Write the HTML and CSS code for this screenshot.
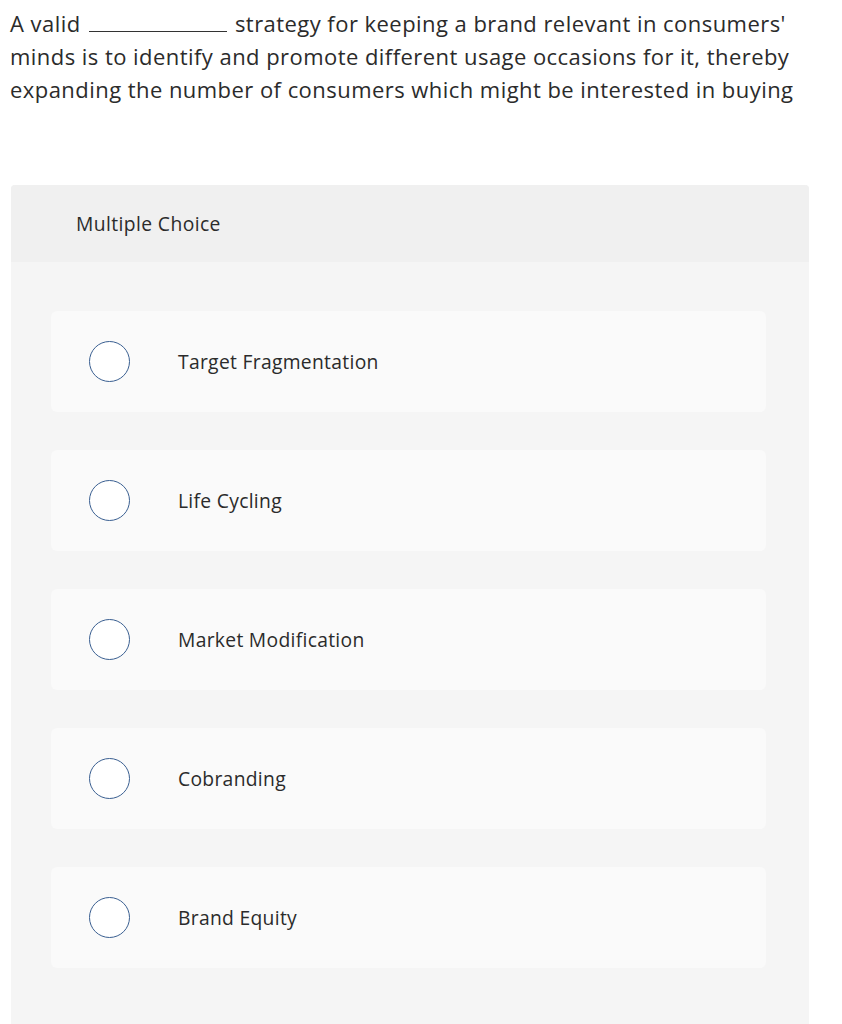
FILE: index.html
```html
<!DOCTYPE html>
<html>
<head>
<meta charset="utf-8">
<link rel="stylesheet" href="styles.css">
</head>
<body>
<div class="question">A valid <span class="blank"></span> strategy for keeping a brand relevant in consumers' minds is to identify and promote different usage occasions for it, thereby expanding the number of consumers which might be interested in buying</div>
<div class="card">
  <div class="card-header">Multiple Choice</div>
  <div class="card-body">
    <div class="option"><span class="radio"></span><span class="label">Target Fragmentation</span></div>
    <div class="option"><span class="radio"></span><span class="label">Life Cycling</span></div>
    <div class="option"><span class="radio"></span><span class="label">Market Modification</span></div>
    <div class="option"><span class="radio"></span><span class="label">Cobranding</span></div>
    <div class="option"><span class="radio"></span><span class="label">Brand Equity</span></div>
  </div>
</div>
</body>
</html>
```
FILE: styles.css
```css
html, body {
  margin: 0;
  padding: 0;
  background: #ffffff;
}
body {
  font-family: "Open Sans", Lato, sans-serif;
  color: #2b2b2b;
}
.question {
  padding: 7px 20px 0 10px;
  font-size: 22px;
  line-height: 33px;
  letter-spacing: 0.45px;
  width: 800px;
}
.blank {
  display: inline-block;
  width: 138px;
  height: 20px;
  margin: 0 2px;
  border-bottom: 1px solid #333;
  vertical-align: baseline;
}
.card {
  margin: 79px 0 0 11px;
  width: 798px;
  background: #f5f5f5;
  border-radius: 4px 4px 0 0;
}
.card-header {
  height: 77px;
  background: #f0f0f0;
  border-radius: 4px 4px 0 0;
  display: flex;
  align-items: center;
  padding-left: 65px;
  font-size: 19.3px;
  letter-spacing: 0.4px;
}
.card-body {
  padding: 49px 43px 60px 40px;
  display: flex;
  flex-direction: column;
  gap: 38px;
}
.option {
  height: 101px;
  background: #fafafa;
  border-radius: 6px;
  display: flex;
  align-items: center;
  padding-left: 38px;
}
.radio {
  width: 39px;
  height: 39px;
  border: 1.5px solid #3a5f91;
  border-radius: 50%;
  background: #fff;
  flex: none;
}
.label {
  margin-left: 48px;
  font-size: 19.3px;
  letter-spacing: 0.3px;
}
```
